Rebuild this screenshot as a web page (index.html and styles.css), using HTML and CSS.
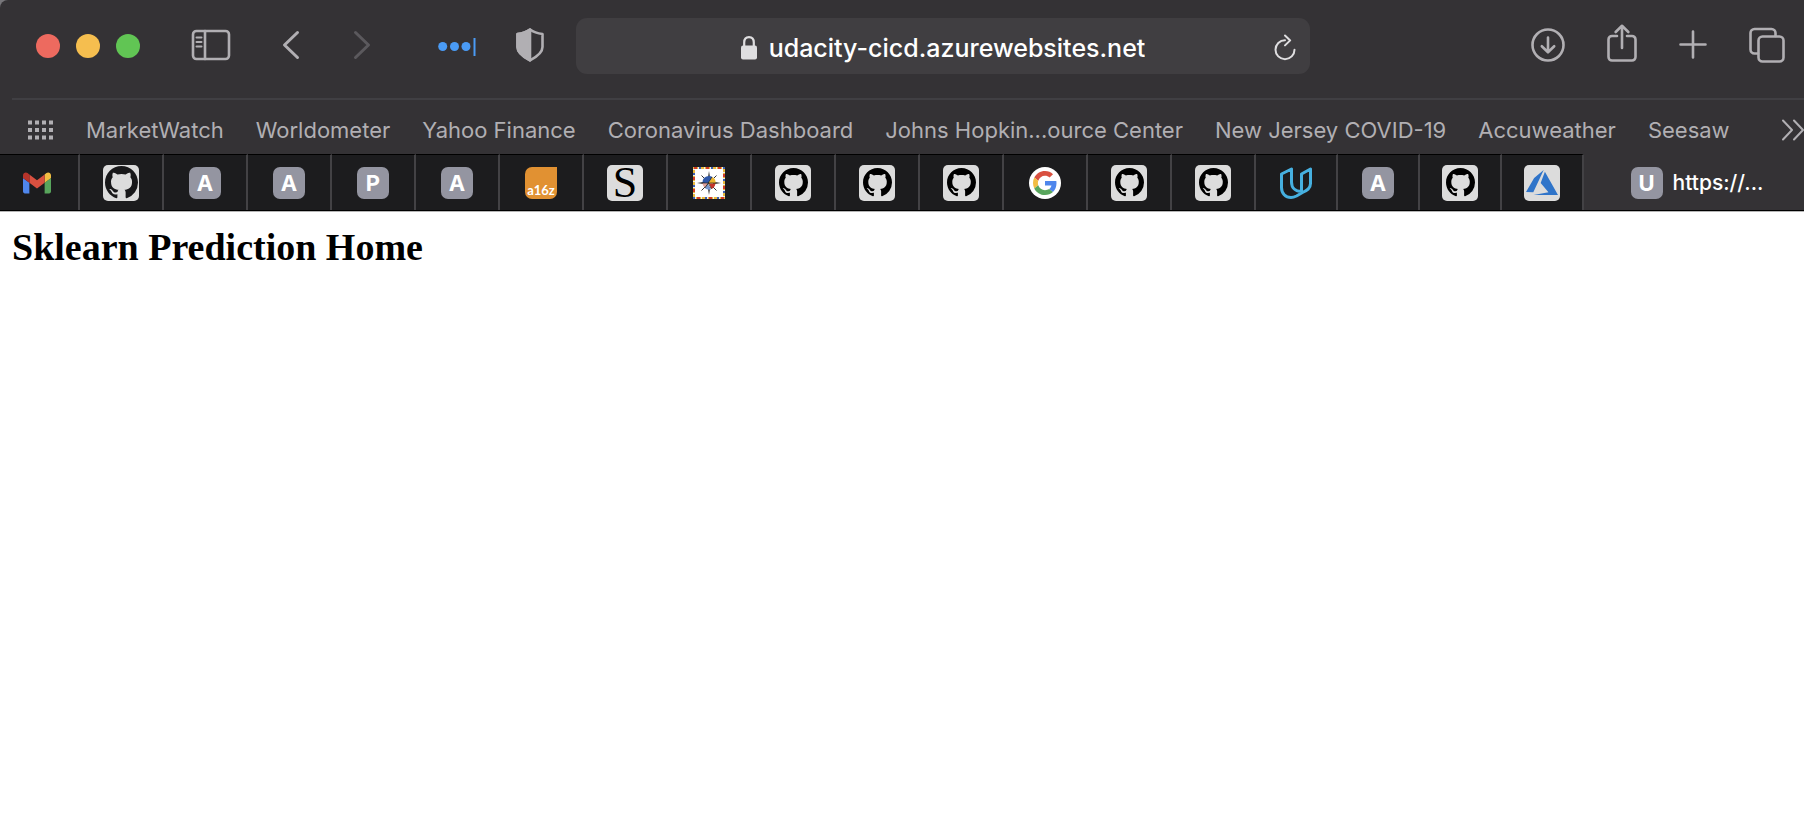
FILE: index.html
```html
<!DOCTYPE html>
<html lang="en">
<head>
<meta charset="utf-8">
<title>Sklearn Prediction Home</title>
<link rel="stylesheet" href="styles.css">
</head>
<body>
<svg class="symbols" aria-hidden="true">
  <symbol id="octocat" viewBox="0 0 16 16"><path d="M8 0C3.58 0 0 3.58 0 8c0 3.54 2.29 6.53 5.47 7.59.4.07.55-.17.55-.38 0-.19-.01-.82-.01-1.49-2.01.37-2.53-.49-2.69-.94-.09-.23-.48-.94-.82-1.13-.28-.15-.68-.52-.01-.53.63-.01 1.08.58 1.23.82.72 1.21 1.87.87 2.33.66.07-.52.28-.87.51-1.07-1.78-.2-3.64-.89-3.64-3.95 0-.87.31-1.59.82-2.15-.08-.2-.36-1.02.08-2.12 0 0 .67-.21 2.2.82.64-.18 1.32-.27 2-.27.68 0 1.36.09 2 .27 1.53-1.04 2.2-.82 2.2-.82.44 1.1.16 1.92.08 2.12.51.56.82 1.27.82 2.15 0 3.07-1.87 3.75-3.65 3.95.29.25.54.73.54 1.48 0 1.07-.01 1.93-.01 2.2 0 .21.15.46.55.38A8.013 8.013 0 0016 8c0-4.42-3.58-8-8-8z"/></symbol>
</svg>
<header class="browser">
  <div class="toolbar">
    <div class="side side-left">
      <div class="lights">
        <button class="light red" aria-label="Close"></button>
        <button class="light yellow" aria-label="Minimize"></button>
        <button class="light green" aria-label="Zoom"></button>
      </div>
      <button class="tool" aria-label="Sidebar"><svg width="40" height="32" viewBox="0 0 40 32"><rect x="2" y="2" width="36" height="28" rx="3.5"/><path d="M14 2v28"/><path class="thin" d="M5.500 8.500h5M5.500 13h5M5.500 17.500h5"/></svg></button>
      <div class="nav">
        <button class="tool" aria-label="Back"><svg width="18" height="32" viewBox="0 0 18 32"><path class="bold" d="M15.500 3.500 2.500 16l13 12.500"/></svg></button>
        <button class="tool dim" aria-label="Forward" disabled><svg width="18" height="32" viewBox="0 0 18 32"><path class="bold" d="M2.500 3.500l13 12.500-13 12.500"/></svg></button>
      </div>
      <div class="ext">
        <button class="tool" aria-label="Password manager"><svg width="38" height="32" viewBox="0 0 38 32"><g class="blue"><circle cx="4.700" cy="17.500" r="4.500"/><circle cx="16.500" cy="17.500" r="4.500"/><circle cx="28" cy="17.500" r="4.500"/><path d="M35.500 9h2v18h-2z"/></g></svg></button>
        <button class="tool" aria-label="Privacy report"><svg width="28" height="34" viewBox="0 0 28 34"><path d="M14 1.500C10 4.500 6 5.500 1.500 6v13c0 6 6 10 12.500 13.300C20.500 29 26.500 25 26.500 19V6C22 5.500 18 4.500 14 1.500z"/><path class="fill" d="M14 1.500C10 4.500 6 5.500 1.500 6v13c0 6 6 10 12.500 13.300z"/></svg></button>
      </div>
    </div>
    <form class="address">
      <svg class="lock" width="16" height="24" viewBox="0 0 16 24" aria-hidden="true"><rect x="0" y="9.500" width="16" height="14" rx="2"/><path d="M3.200 10V6.500c0-3.400 2-5.400 4.800-5.400s4.800 2 4.800 5.400V10"/></svg>
      <input class="url" type="text" aria-label="Address" value="udacity-cicd.azurewebsites.net">
      <button class="tool reload" type="button" aria-label="Reload"><svg width="22" height="28" viewBox="0 0 22 28"><path d="M11 6.200a9.500 9.500 0 1 0 9.500 9.500M11 1.500l5.200 4.900-5.200 5"/></svg></button>
    </form>
    <div class="side side-right">
      <button class="tool" aria-label="Downloads"><svg width="34" height="34" viewBox="0 0 34 34"><circle cx="17" cy="17" r="15.500"/><path d="M17 9.500v14.500M10.800 18.200 17 24.300l6.200-6.100"/></svg></button>
      <button class="tool" aria-label="Share"><svg width="30" height="42" viewBox="0 0 30 42"><path d="M10 12H5a3.500 3.500 0 0 0-3.500 3.500V33A3.500 3.500 0 0 0 5 36.500h20a3.500 3.500 0 0 0 3.500-3.500V15.500A3.500 3.500 0 0 0 25 12h-5M15 24V2M8.700 8 15 1.800 21.300 8"/></svg></button>
      <button class="tool" aria-label="New tab"><svg width="28" height="34" viewBox="0 0 28 34"><path d="M14 3.500v26M1.500 16.500h25"/></svg></button>
      <button class="tool" aria-label="Tab overview"><svg width="36" height="36" viewBox="0 0 36 36"><rect x="9.500" y="9.500" width="25" height="25" rx="4"/><path d="M9 26.500H5.500a4 4 0 0 1-4-4V6a4 4 0 0 1 4-4h17a4 4 0 0 1 4 4v3"/></svg></button>
    </div>
  </div>
  <nav class="bookmarks" aria-label="Favorites">
    <button class="tool" aria-label="Show favorites"><svg width="26" height="20" viewBox="0 0 26 20"><path class="grid" d="M2 .500v19M9 .500v19M16 .500v19M23 .500v19"/></svg></button>
    <div class="links">
      <a href="#">MarketWatch</a><a href="#">Worldometer</a><a href="#">Yahoo Finance</a><a href="#">Coronavirus Dashboard</a><a href="#">Johns Hopkin...ource Center</a><a href="#">New Jersey COVID-19</a><a href="#">Accuweather</a><a href="#">Seesaw</a>
    </div>
    <button class="tool more" aria-label="More favorites"><svg width="22" height="24" viewBox="0 0 22 24"><path class="light-line" d="M1 2.500 10 12l-9 9.500M12 2.500l9 9.500-9 9.500"/></svg></button>
  </nav>
  <nav class="tabs" aria-label="Tabs">
    <a class="tab first" href="#" aria-label="Gmail"><svg width="28" height="22" viewBox="52 42 88 66"><path fill="#4f86ec" d="M58 108h14V74L52 59v43c0 3.320 2.690 6 6 6"/><path fill="#58a55c" d="M120 108h14c3.320 0 6-2.690 6-6V59l-20 15"/><path fill="#f2bd42" d="M120 48v26l20-15v-8c0-7.420-8.470-11.650-14.400-7.200"/><path fill="#d95040" d="M72 74V48l24 18 24-18v26L96 92"/><path fill="#b6342b" d="M52 51v8l20 15V48l-5.600-4.200c-5.940-4.450-14.400-.220-14.400 7.200"/></svg></a>
    <a class="tab" href="#" aria-label="GitHub"><span class="tile"><svg class="cat large"><use href="#octocat"/></svg></span></a>
    <a class="tab" href="#"><span class="letter">A</span></a>
    <a class="tab" href="#"><span class="letter">A</span></a>
    <a class="tab" href="#"><span class="letter">P</span></a>
    <a class="tab" href="#"><span class="letter">A</span></a>
    <a class="tab" href="#"><span class="a16z">a16z</span></a>
    <a class="tab" href="#"><span class="tile serif">S</span></a>
    <a class="tab" href="#" aria-label="Compass"><svg width="32" height="32" viewBox="0 0 32 32"><path fill="#fff" d="M0 0h32v32H0z"/><g fill="none" stroke-width="2"><path stroke="#e9b93c" d="M1 1h30v30H1z"/><path stroke="#cf3a2a" stroke-dasharray="3 9" d="M1 1h30v30H1z"/><path stroke="#3d5fae" stroke-dasharray="2 10" stroke-dashoffset="-5" d="M1 1h30v30H1z"/><path stroke="#eee" stroke-dasharray="1 5" stroke-dashoffset="-4" d="M1 1h30v30H1z"/></g><path fill="#222" d="m16 4 1.200 8h-2.400zM16 28l1.200-8h-2.400zM4 16l8-1.200v2.400zM28 16l-8-1.200v2.400z"/><path stroke="#333" d="m8.500 8.500 15 15M23.500 8.500l-15 15"/><path fill="#2f58a8" d="M9.500 15.500a6.500 6.500 0 0 1 10-5.500L15 16.500z"/><path fill="#edb72f" d="M19.500 10a6.500 6.500 0 0 1 3 6.500H15z"/><path fill="#c4352a" d="M16 16.500h6.500c-.5 3-2 4.500-4 5.500z"/><path fill="#7797cd" d="M15 17l3 5.500c-2.500.6-4.500 0-6-1.500z"/><path fill="#e0a29b" d="M9.500 16H15l-3 4.500c-1.500-1-2.300-2.500-2.500-4.500z"/><path stroke="#222" stroke-width=".7" d="M9.500 16h13M19 10l-7 11M15.500 16.500l3 5.500"/></svg></a>
    <a class="tab" href="#" aria-label="GitHub"><span class="tile"><svg class="cat"><use href="#octocat"/></svg></span></a>
    <a class="tab" href="#" aria-label="GitHub"><span class="tile"><svg class="cat"><use href="#octocat"/></svg></span></a>
    <a class="tab" href="#" aria-label="GitHub"><span class="tile"><svg class="cat"><use href="#octocat"/></svg></span></a>
    <a class="tab" href="#" aria-label="Google"><span class="round"><svg width="24" height="24" viewBox="0 0 48 48"><path fill="#d95040" d="M24 9.500c3.540 0 6.710 1.220 9.210 3.600l6.850-6.850C35.900 2.380 30.470 0 24 0 14.620 0 6.510 5.380 2.560 13.220l7.980 6.190C12.430 13.720 17.740 9.500 24 9.500z"/><path fill="#4f86ec" d="M46.980 24.550c0-1.570-.15-3.090-.38-4.550H24v9.020h12.940c-.58 2.960-2.260 5.480-4.780 7.180l7.730 6c4.510-4.180 7.090-10.360 7.090-17.650z"/><path fill="#f2bd42" d="M10.530 28.590c-.48-1.450-.76-2.990-.76-4.590s.27-3.140.76-4.590l-7.980-6.190C.92 16.460 0 20.120 0 24c0 3.880.92 7.540 2.560 10.780l7.970-6.190z"/><path fill="#58a55c" d="M24 48c6.480 0 11.930-2.130 15.890-5.810l-7.730-6c-2.150 1.450-4.920 2.300-8.160 2.300-6.260 0-11.570-4.220-13.470-9.910l-7.980 6.190C6.510 42.620 14.620 48 24 48z"/></svg></span></a>
    <a class="tab" href="#" aria-label="GitHub"><span class="tile"><svg class="cat"><use href="#octocat"/></svg></span></a>
    <a class="tab" href="#" aria-label="GitHub"><span class="tile"><svg class="cat"><use href="#octocat"/></svg></span></a>
    <a class="tab narrow" href="#" aria-label="Udacity"><svg width="32" height="32" viewBox="0 0 32 32"><path fill="none" stroke="#46b0e0" stroke-width="3" stroke-linejoin="round" d="M1.500 7 11.500 2v13c0 6 4 9.500 10 9.500V7l9-5v14.500c0 5-3.500 7-8 9l-6 3.500c-2 1-3.500 1.500-5.500 1.500-5.500 0-9.500-4-9.500-10z"/></svg></a>
    <a class="tab narrow" href="#"><span class="letter">A</span></a>
    <a class="tab narrow" href="#" aria-label="GitHub"><span class="tile"><svg class="cat"><use href="#octocat"/></svg></span></a>
    <a class="tab narrow" href="#" aria-label="Azure"><span class="tile"><svg width="32" height="25" viewBox="2 4.240 20 15.520"><path fill="#2f74c9" d="M13.050 4.240 6.560 18.050 2 18l5.090-8.760zm.75 1.090L22 19.760H6.740l9.300-1.660-4.870-5.790z"/></svg></span></a>
    <a class="tab active" href="#" aria-current="page"><span class="letter">U</span><span>https://...</span></a>
  </nav>
</header>
<main class="page">
  <h1>Sklearn Prediction Home</h1>
</main>
</body>
</html>
```
FILE: styles.css
```css
* { box-sizing: border-box; }

body {
  margin: 0;
  background: #fff;
  color: #000;
}

.symbols { display: none; }

button {
  margin: 0;
  padding: 0;
  border: 0;
  background: none;
}

a { color: inherit; text-decoration: none; }
svg { display: block; flex: none; }

.browser {
  background: #77767a;
  font-family: Inter, "Liberation Sans", sans-serif;
  border-bottom: 1px solid #b5b5b5;
}

.toolbar {
  display: grid;
  grid-template-columns: minmax(0, 540fr) minmax(0, 734fr) minmax(0, 475fr);
  height: 98px;
  padding: 18px 19px 24px 36px;
  align-items: start;
  background: #343235;
  border-top-left-radius: 8px;
}

.side {
  display: flex;
  align-items: center;
  height: 54px;
}

.side-left { gap: 51px; }
.side-right { justify-content: flex-end; gap: 42px; }

.lights { display: flex; gap: 16px; padding-top: 2px; }
.light { width: 24px; height: 24px; border-radius: 50%; }
.red { background: #ed6a5f; }
.yellow { background: #f5be4f; }
.green { background: #61c554; }

.nav { display: flex; gap: 53px; }
.ext { display: flex; align-items: center; gap: 40px; margin-left: 16px; }

.tool { color: #b1afb3; }
.tool svg {
  fill: none;
  stroke: currentColor;
  stroke-width: 2.6;
  stroke-linecap: round;
  stroke-linejoin: round;
}
.tool .thin { stroke-width: 2; }
.tool .bold { stroke-width: 3; }
.tool .light-line { stroke-width: 2; }
.tool .fill { fill: currentColor; }
.tool .blue { fill: #4a9bf5; stroke: none; }
.tool .grid {
  stroke-width: 4;
  stroke-linecap: butt;
  stroke-dasharray: 4 3.5;
}
.dim { color: #5b595d; }

.address {
  display: flex;
  align-items: center;
  gap: 12px;
  height: 56px;
  padding: 4px 14px 0 48px;
  border-radius: 11px;
  background: #403e41;
}
.lock { fill: #dfdee0; margin-left: auto; }
.lock path { fill: none; stroke: #dfdee0; stroke-width: 2.2; }
.url {
  field-sizing: content;
  margin: 0;
  padding: 0;
  border: 0;
  outline: 0;
  background: none;
  color: #fff;
  font: 500 25px/32px Inter, "Liberation Sans", sans-serif;
}
.tool.reload { margin-left: auto; color: #dfdee0; }
.tool.reload svg { stroke-width: 2; }

.bookmarks {
  display: flex;
  align-items: center;
  height: 56px;
  padding: 8px 0 0 28px;
  background: linear-gradient(#403f43, #403f43) 12px 0 / 100% 2px no-repeat #343235;
  color: #b1afb3;
  font-size: 22px;
  line-height: 28px;
}
.links {
  display: flex;
  gap: 32px;
  margin-left: 32px;
  white-space: nowrap;
}
.more { margin-left: auto; }

.tabs {
  display: flex;
  height: 57px;
  background: #343235;
  border-bottom: 1px solid #000;
}
.tab {
  display: flex;
  flex: 84 1 84px;
  align-items: center;
  justify-content: center;
  min-width: 0;
  background: #1c1c1e;
  border-top: 1px solid #000;
  border-right: 2px solid #434245;
}
.first { flex: 80 1 80px; padding-right: 4px; }
.narrow { flex: 82 1 82px; }
.active {
  flex: 220 1 220px;
  gap: 10px;
  padding-left: 6px;
  border-right: 0;
  border-top-color: #343235;
  background: #343235;
  color: #fff;
  font-size: 21px;
  font-weight: 500;
}

.tile, .letter, .a16z, .round {
  display: flex;
  align-items: center;
  justify-content: center;
  flex: none;
}
.tile {
  width: 36px;
  height: 36px;
  border-radius: 5px;
  background: #dcdcdc;
  color: #000;
}
.cat { width: 29px; height: 29px; }
.cat.large { width: 33px; height: 33px; fill: #18181a; }
.serif { font: 44px/36px "Liberation Serif", serif; }
.letter {
  width: 32px;
  height: 32px;
  border-radius: 7px;
  background: #9495a1;
  color: #fff;
  font-size: 22px;
  font-weight: 700;
}
.a16z {
  width: 32px;
  height: 32px;
  align-items: flex-end;
  padding-bottom: 1px;
  border-radius: 7px 0 7px 7px;
  background: #e19132;
  color: #fff;
  font: 700 13px/16px Lato, sans-serif;
}
.round {
  width: 32px;
  height: 32px;
  border-radius: 50%;
  background: #fff;
}

.page { padding: 11px 12px; }
h1 {
  margin: 0;
  font: 700 38px/48px "Liberation Serif", serif;
}
```
